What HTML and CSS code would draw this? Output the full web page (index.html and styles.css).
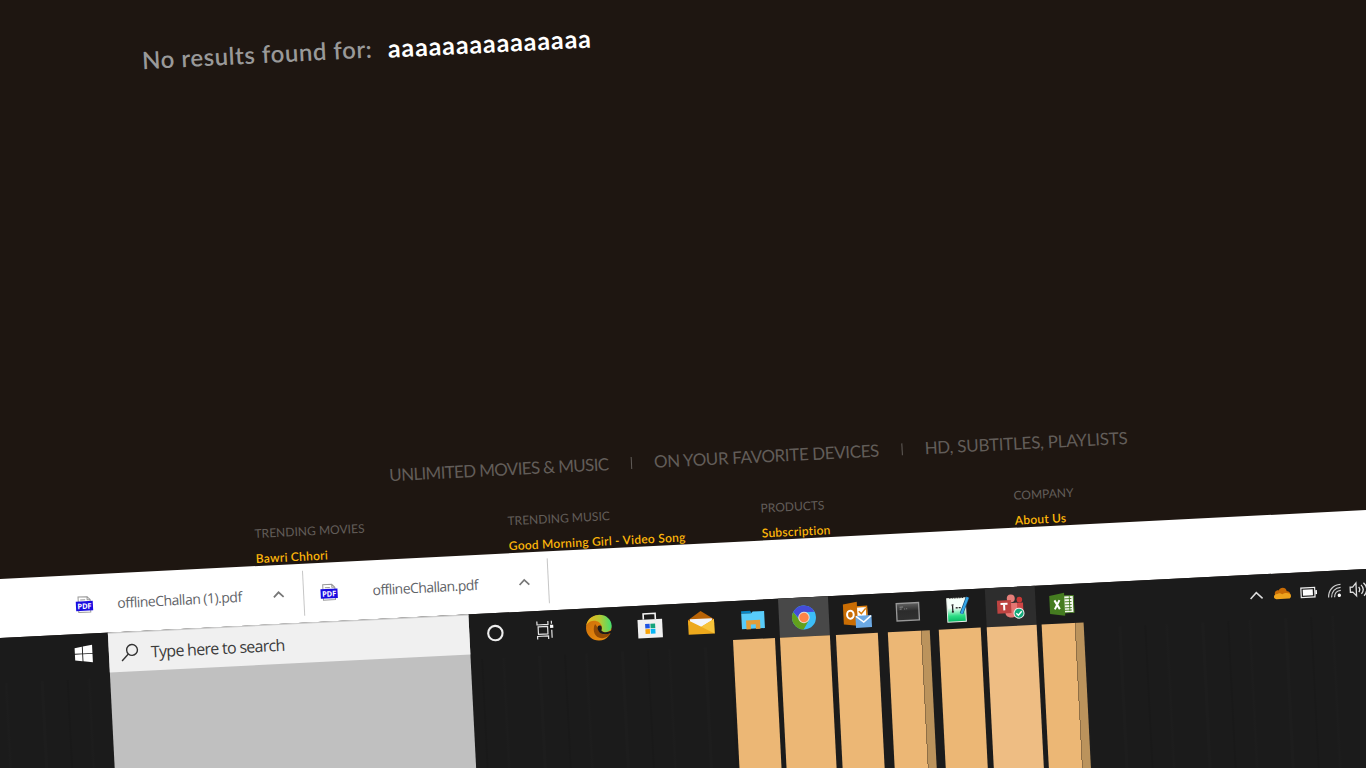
FILE: index.html
```
<!DOCTYPE html>
<html lang="en">
<head>
<meta charset="utf-8">
<title>Search results</title>
<link rel="stylesheet" href="styles.css">
</head>
<body>
<div class="viewport">
<div class="scene">
  <main class="page">
    <h1 class="result"><span class="result-label">No results found for:</span><span class="result-query">aaaaaaaaaaaaaaa</span></h1>
    <footer class="footer">
      <div class="claims">
        <span class="claim c1">UNLIMITED MOVIES &amp; MUSIC</span><i class="sep"></i>
        <span class="claim c2">ON YOUR FAVORITE DEVICES</span><i class="sep"></i>
        <span class="claim c3">HD, SUBTITLES, PLAYLISTS</span>
      </div>
      <div class="columns">
        <section><h2>TRENDING MOVIES</h2><a>Bawri Chhori</a></section>
        <section><h2>TRENDING MUSIC</h2><a>Good Morning Girl - Video Song</a></section>
        <section><h2>PRODUCTS</h2><a>Subscription</a></section>
        <section><h2>COMPANY</h2><a>About Us</a></section>
      </div>
    </footer>
  </main>

  <div class="downloads">
    <div class="download">
      <svg class="pdf" viewBox="0 0 18 18"><path d="M3 6V1h9l3 3v2M3 13v3.500h12V13M12 1v3h3M5 4h5" fill="none" stroke="#999"/><rect x=".5" y="5.500" width="17" height="9.500" fill="#1a0be0"/><text x="9" y="13.100" text-anchor="middle" textLength="14">PDF</text></svg>
      <span class="file f1">offlineChallan (1).pdf</span>
      <svg class="chev" viewBox="0 0 12 8"><path d="M1.500 6.500 6 2l4.500 4.500" fill="none" stroke="#777" stroke-width="1.600"/></svg>
    </div>
    <div class="download">
      <svg class="pdf" viewBox="0 0 18 18"><path d="M3 6V1h9l3 3v2M3 13v3.500h12V13M12 1v3h3M5 4h5" fill="none" stroke="#999"/><rect x=".5" y="5.500" width="17" height="9.500" fill="#1a0be0"/><text x="9" y="13.100" text-anchor="middle" textLength="14">PDF</text></svg>
      <span class="file f2">offlineChallan.pdf</span>
      <svg class="chev" viewBox="0 0 12 8"><path d="M1.500 6.500 6 2l4.500 4.500" fill="none" stroke="#777" stroke-width="1.600"/></svg>
    </div>
  </div>

  <div class="taskbar">
    <div class="start"><svg width="18" height="18" viewBox="0 0 18 18"><path fill="#fff" d="M0 2.800 7.300 1.700V8.500H0zM8.200 1.600 17.600.2V8.500H8.200zM0 9.400h7.300v6.900L0 15.300zM8.200 9.400h9.400v8.400L8.200 16.400z"/></svg></div>
    <div class="search">
      <div class="search-box">
        <svg width="18" height="18" viewBox="0 0 18 18"><g fill="none" stroke="#333" stroke-width="1.400"><circle cx="11.300" cy="6.500" r="5.400"/><path d="M7.400 10.400.8 17"/></g></svg>
        <span>Type here to search</span>
      </div>
    </div>
    <div class="apps">
      <div class="app"><svg width="18" height="18" viewBox="0 0 18 18"><circle cx="9" cy="9.500" r="7.200" fill="none" stroke="#eee" stroke-width="2.100"/></svg></div>
      <div class="app view"><svg width="18" height="18" viewBox="0 0 18 18"><g fill="none" stroke="#e4e4e4" stroke-width="1.200"><path d="M1 0v3.500h11V0M2 5.500h9.500v7.500H2zM1 18v-3h11v3M15.500 0v3M15.500 9v8"/></g><rect x="14" y="4" width="3.200" height="3.200" fill="#fff"/></svg></div>
      <div class="app"><svg width="26" height="26" viewBox="0 0 26 26"><defs><linearGradient id="eg"><stop offset="0" stop-color="#f2b51d"/><stop offset=".55" stop-color="#b8c832"/><stop offset="1" stop-color="#43e070"/></linearGradient><linearGradient id="eo" x2="1" y2="1"><stop offset="0" stop-color="#c96b08"/><stop offset="1" stop-color="#ef9310"/></linearGradient></defs><g transform="translate(.5 .5)"><circle cx="13" cy="13" r="12.700" fill="url(#eo)"/><path fill="#914a05" d="M9.500 9c-4 7 0 15 7 14.500 4-.5 6.500-1.500 8.200-4.500-7 2-11.700 0-12-5.500z"/><path fill="url(#eg)" d="M.3 11C1.500 4 7 0 13.300 0 21 0 26 5.300 26 11.200c0 4.300-3.300 6.300-6.400 6.300-2.800 0-4.700-.9-4.500-1.700.1-.6 1.500-1.200 1.200-3.600C15.800 8 11.800 5.700 8.500 5.700 4.500 5.700 1.500 8 .3 11z"/><path fill="#1b1b1b" d="M15.500 11c-3-1.500-4.500 1-3 4.500 1.500 4 6.500 5.300 12.500 3.300l1.200-3.300c-3 2.500-8 3-10.200.8-1-1 1-2.300-.5-5.300z"/></g></svg></div>
      <div class="app"><svg width="26" height="27" viewBox="0 0 26 27"><path d="M6.500 8V2.300h12V8" fill="none" stroke="#f4f4f4" stroke-width="1.600"/><path fill="#f1f1f1" d="M.6 8h24.600v18.500H.6z"/><path fill="#1f55e3" d="M8 12.500h4.500V17H8z"/><path fill="#13a37c" d="M13.300 12.500H18V17h-4.700z"/><path fill="#f7a30a" d="M8 17.800h4.500v4.700H8z"/><path fill="#08b5f5" d="M13.300 17.800H18v4.700h-4.700z"/></svg></div>
      <div class="app"><svg width="26" height="24" viewBox="0 0 26 24"><g transform="translate(0 .5)"><path fill="#b86306" d="M0 9 13 .3 26 9v5H0z"/><path fill="#f3f5fa" d="M2 8h22v3l-11 6L2 11z"/><path fill="#eda91c" d="M0 9v14.500h26V9l-13 7z"/><path fill="#f7c33a" d="M26 9v14.500L8 13.200l5 2.800z"/></g></svg></div>
      <div class="app run"><svg width="24" height="20" viewBox="0 0 24 20"><path fill="#0785c4" d="M.5 1h9l1.500 2.500H.5z"/><path fill="#58ccfa" d="M.5 3.500h10L12 2h11.500v17H.5z"/><path fill="#e39d38" d="M5 19.500v-9h14v9h-4.500v-4.700h-5v4.700z"/></svg></div>
      <div class="app run wide active"><svg width="25" height="25" viewBox="0 0 26 26"><circle cx="13" cy="13.500" r="12.500" fill="#3cbdf7"/><path fill="#62a01c" d="M2.200 7.200A12.500 12.500 0 0 0 12 26l6-9.500-10-1z"/><path fill="#444cd8" d="M2.200 7.200a12.500 12.500 0 0 1 22 .8H13L8 14.500z"/><circle cx="13" cy="13.500" r="6" fill="#e8dcd5"/><circle cx="13" cy="13.500" r="4.900" fill="#ff8447"/></svg></div>
      <div class="app run"><svg width="28" height="27" viewBox="0 0 28 27"><g transform="translate(1.500 1)"><path fill="#fff" d="M13 5h11v12H13z"/><path fill="none" stroke="#d97c0b" stroke-width="1.500" d="M13 5h10.500v11H13zM15.500 9.500 18 12l4.500-5"/><path fill="#c96d04" d="M0 2 14 0v24L0 22z"/><ellipse cx="7" cy="12.500" rx="3.300" ry="4" fill="none" stroke="#fff" stroke-width="2"/><path fill="#6ba9e4" d="M12 14h16v12H12z"/><path fill="none" stroke="#fff" stroke-width="1.500" d="m12.500 14.500 7.500 6 7.500-6"/></g></svg></div>
      <div class="app run stacked"><svg width="24" height="19" viewBox="0 0 24 19"><defs><linearGradient id="cm" x2="0" y2="1"><stop offset="0" stop-color="#626262"/><stop offset=".45" stop-color="#2c2c2c"/><stop offset="1" stop-color="#303030"/></linearGradient></defs><path fill="url(#cm)" stroke="#989898" stroke-width="1.300" d="M.8.8h22.400v17.400H.8z"/><path stroke="#888" d="M4 4.500h3.500M4 6.500h2M8.500 6.500h1M10.500 6.500h1" fill="none"/></svg></div>
      <div class="app run"><svg width="24" height="27" viewBox="0 0 24 27"><defs><linearGradient id="np" x2="0" y2="1"><stop offset=".4" stop-color="#f6fff9"/><stop offset=".75" stop-color="#2bdd84"/><stop offset="1" stop-color="#08b662"/></linearGradient></defs><path fill="url(#np)" stroke="#e8eee8" d="M.5 2.500H19V26H.5z"/><path stroke="#222" stroke-dasharray="1.500 1" d="M3 2h14"/><path fill="none" stroke="#222" stroke-width="1.300" d="M6 9v7M5 9h2M5 16h2M9 12h2M12 12h2"/><path stroke="#174e79" stroke-width="3.600" d="m21.500 2-7 16"/><path stroke="#34a7e8" stroke-width="2.300" d="m21.500 2-7 16"/></svg></div>
      <div class="app run wide teams"><svg width="27" height="25" viewBox="0 0 27 25"><circle cx="14" cy="4.500" r="4" fill="#e67e79"/><circle cx="22.500" cy="6" r="2.800" fill="#c93836"/><path fill="#ce4646" d="M18 9h8v10h-8z"/><path fill="#e47672" d="M8 9h12v10c0 6-12 6-12 0z"/><path fill="#bd4341" d="M0 6h14v13H0z"/><path fill="none" stroke="#fff" stroke-width="2" d="M3.500 9.500h7M7 9v7"/><circle cx="21.500" cy="19.500" r="5" fill="#12aa7a" stroke="#eee"/><path fill="none" stroke="#fff" stroke-width="1.500" d="m18.800 19.500 2 2 3.500-3.800"/></svg></div>
      <div class="app run stacked"><svg width="25" height="23" viewBox="0 0 25 23"><path fill="#f5f8f0" stroke="#457c20" d="M13 3.500h11v17H13z"/><path fill="none" stroke="#457c20" stroke-width=".9" d="M15 6.500h7M15 9.500h7M15 12.500h7M15 15.500h7M15 18h7M20 4v15"/><path fill="#457c20" d="M0 3 15 .5v23L0 21z"/><path fill="none" stroke="#fff" stroke-width="2" d="m5 7.500 5 9M10 7.500l-5 9"/></svg></div>
    </div>
    <div class="tray">
      <svg width="14" height="9" viewBox="0 0 14 9"><path d="m1 8 6-6 6 6" fill="none" stroke="#ddd" stroke-width="1.500"/></svg>
      <svg width="18" height="12" viewBox="0 0 18 12"><path fill="#c86b05" d="M2 8C0 4 4 2 5.500 3 7-.8 13-.5 13.500 4c3 0 4 2.500 3 5z"/><path fill="#eea31c" d="M3 11.500C-1 11.500 0 6 4 6.500c2-1.500 4 0 5 .5 2-2 9-1.500 8.500 2 0 1.500-1 2.500-2.500 2.500z"/></svg>
      <svg width="17" height="11" viewBox="0 0 17 11"><path d="M.7.700h13.800v9.400H.7z" fill="none" stroke="#eee" stroke-width="1.200"/><path fill="#fff" d="M2.500 2.500h10v6h-10zM15 3.500h1.600v4H15z"/></svg>
      <svg width="14" height="14" viewBox="0 0 14 14"><g fill="none" stroke="#ccc" stroke-width="1.200"><path d="M1 13.500C1 6.500 6 1 13.500 1M4 13.500C4 8 8 4 13.500 4M7 13.500C7 9.500 9.500 7 13.500 7"/></g><circle cx="11.800" cy="11.800" r="1.700" fill="#fff"/></svg>
      <svg width="20" height="16" viewBox="0 0 20 16"><path d="M1 5.300h2.500l3.500-4v13l-3.500-4H1zM9.500 5.500q2 2.500 0 5M12 3.500q4 4.500 0 9M14.500 1.500q6 6.500 0 13" fill="none" stroke="#ddd" stroke-width="1.300"/></svg>
    </div>
  </div>
</div>
</div>
</body>
</html>
```
FILE: styles.css
```
* { box-sizing: border-box; }
body { margin: 0; background: #1e1611; }
svg { display: block; flex: none; overflow: visible; }

.viewport { display: flow-root; width: 1366px; height: 768px; overflow: hidden; }

/* The whole desktop is tilted around the left end of the download shelf. */
.scene { width: 1500px; height: 940px; margin: -60px 0 0 -60px; transform-origin: 60px 639px; transform: rotate(-2.89deg); }

.page { height: 639px; padding-top: 113px; background: #1e1611; font-family: Lato, "Open Sans", sans-serif; overflow: hidden; white-space: nowrap; }
.result { display: flex; margin: 0; padding-left: 228px; height: 30px; font-size: 24px; line-height: 30px; font-weight: 600; }
.result-label { width: 246px; color: #999; letter-spacing: 0.55px; }
.result-query { color: #fff; font-size: 25px; font-weight: 700; letter-spacing: 0.92px; }
.footer { padding-top: 402px; }
.claims { display: flex; align-items: center; height: 20px; padding-left: 454px; font-size: 17px; line-height: 20px; color: #625d59; }
.c1 { width: 242px; letter-spacing: -0.67px; }
.c2 { width: 248px; letter-spacing: -0.38px; }
.c3 { letter-spacing: -0.24px; }
.sep { width: 1px; height: 12px; margin-right: 22px; background: #625d59; }
.columns { display: grid; grid-template-columns: repeat(4, 253.3px); padding: 34px 0 0 316.5px; font-size: 12px; line-height: 16px; }
.columns h2 { margin: 0 0 8.500px; font-size: 12px; font-weight: 400; color: #625d59; letter-spacing: 0.03px; }
.columns a { display: block; color: #fcb50a; font-weight: 600; letter-spacing: 0.24px; }

.downloads { display: flex; height: 59px; padding-left: 118px; background: #fff; }
.download { display: flex; align-items: center; width: 245px; height: 45px; margin-top: 7px; padding-left: 16px; border-right: 1px solid #c6c6c6; font: 14px "Open Sans", "Noto Sans", sans-serif; color: #5f6368; white-space: nowrap; }
.pdf { width: 18px; height: 18px; }
.pdf text { fill: #fff; font: bold 7.500px "Open Sans", sans-serif; }
.file { letter-spacing: -0.5px; }
.f1 { width: 155px; margin-left: 24px; }
.f2 { width: 145px; margin-left: 34.500px; letter-spacing: -0.56px; }
.chev { width: 13px; height: 9px; }

.taskbar { display: flex; height: 242px; background: #1b1b1b repeating-linear-gradient(90deg, transparent 0 12px, #1d1d1d 13px 15px, transparent 16px 38px, #191919 39px 40px, transparent 41px 59px, #1d1d1d 61px, transparent 63px 83px) 0 45px no-repeat; }
.start { display: flex; justify-content: flex-end; align-items: center; width: 165px; height: 40px; padding-right: 16.500px; }
.search { width: 361px; background: #c0c0c0; }
.search-box { display: flex; align-items: center; height: 40px; padding-left: 12px; gap: 12px; background: #f0f0f0; border-top: 1px solid #c9c9c9; font: 16px "Open Sans", "Noto Sans", sans-serif; color: #3b3b3b; letter-spacing: -0.7px; }
.apps { display: flex; }
.app { display: flex; flex-direction: column; align-items: center; width: 51.600px; }
.app > svg { height: 39px; }
.view > svg { margin-left: -3px; }
.run::after { content: ""; width: 42px; flex: 1; background: #ecb775; }
.wide::after { width: 50px; }
.active > svg, .teams > svg { box-sizing: content-box; padding: 0 12.500px; background: #484848; }
.teams > svg { padding: 0 11.500px; background: #2d2d2d; }
.teams::after { background: #eebd83; }
.stacked::after { background: linear-gradient(90deg, #ecb775 33px, #8f6f46 33px 34px, #bb935c 34px); }
.tray { display: flex; align-items: center; height: 40px; margin-left: 162px; gap: 10px; }
.tray svg:nth-child(3) { margin-left: -1px; }
.tray svg:nth-child(5) { margin-left: -2px; }
```
